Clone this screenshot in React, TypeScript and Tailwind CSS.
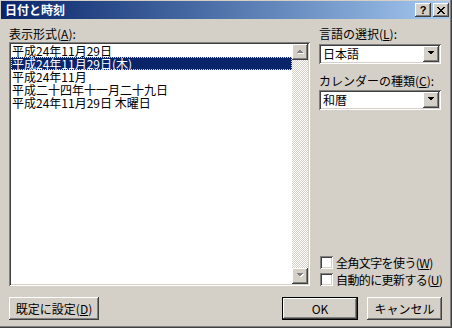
import type { ReactNode } from 'react';

const raised =
  'bg-[#d4d0c8] shadow-[inset_-1px_-1px_#404040,inset_1px_1px_#ffffff,inset_-2px_-2px_#808080,inset_2px_2px_#d4d0c8]';
const sunken =
  'shadow-[inset_1px_1px_#808080,inset_-1px_-1px_#ffffff,inset_2px_2px_#404040,inset_-2px_-2px_#d4d0c8]';

const FORMATS = [
  '平成24年11月29日',
  '平成24年11月29日(木)',
  '平成24年11月',
  '平成二十四年十一月二十九日',
  '平成24年11月29日 木曜日',
];

/** Label with an underlined access key, e.g. 表示形式(A): */
function Accel({ text, k, tail = '' }: { text: string; k: string; tail?: string }) {
  return (
    <span className="whitespace-nowrap">
      {text}(<u className="underline-offset-1">{k}</u>){tail}
    </span>
  );
}

function Arrow({ dir, disabled }: { dir: 'up' | 'down'; disabled?: boolean }) {
  const pts = dir === 'up' ? '0,4 7,4 3.5,0.5' : '0,0 7,0 3.5,3.5';
  return (
    <svg width="9" height="6" viewBox="0 0 9 6" shapeRendering="crispEdges">
      {disabled && <polygon points={pts} transform="translate(1,1)" fill="#ffffff" />}
      <polygon points={pts} fill={disabled ? '#808080' : '#000000'} />
    </svg>
  );
}

function Combo({ value }: { value: string }) {
  return (
    <div className={`flex h-[20px] w-[122px] bg-white p-[2px] ${sunken}`}>
      <div className="flex-1 pl-[2px] leading-[16px]">{value}</div>
      <div className={`grid h-[16px] w-[16px] place-items-center ${raised}`}>
        <Arrow dir="down" />
      </div>
    </div>
  );
}

function Check({ children }: { children: ReactNode }) {
  return (
    <div className="flex h-[13px] items-center">
      <span className={`ml-[1px] h-[13px] w-[13px] shrink-0 bg-white ${sunken}`} />
      <span className="ml-[3px] leading-[13px] tracking-[-0.6px]">{children}</span>
    </div>
  );
}

function Button({ children, def, w }: { children: ReactNode; def?: boolean; w: string }) {
  return (
    <div className={`${w} h-[23px] ${def ? 'border border-black' : ''}`}>
      <div className={`grid h-full w-full place-items-center leading-[13px] ${raised}`}>{children}</div>
    </div>
  );
}

export default function App() {
  return (
    <div className="h-[328px] w-[452px] overflow-hidden border-r border-b border-[#404040] bg-[#d4d0c8] font-['Noto_Sans_CJK_JP','Noto_Sans',sans-serif] text-[12px] text-black">
      <div className="flex h-full flex-col border-r border-b border-[#808080] pt-[1px] pl-[1px]">
        {/* title bar */}
        <div className="flex h-[18px] items-center bg-gradient-to-r from-[#0a246a] to-[#a6caf0] pl-[4px] pr-[1px]">
          <span className="text-[12px] leading-[18px] font-bold text-white">日付と時刻</span>
          <div className={`ml-auto grid h-[14px] w-[16px] place-items-center ${raised}`}>
            <span className="font-['Liberation_Sans',sans-serif] text-[11px] leading-[11px] font-bold">?</span>
          </div>
          <div className={`ml-[2px] grid h-[14px] w-[16px] place-items-center ${raised}`}>
            <svg width="8" height="7" viewBox="0 0 8 7" shapeRendering="crispEdges">
              <path d="M0 0h2v1h-2zM6 0h2v1h-2zM1 1h2v1h-2zM5 1h2v1h-2zM2 2h4v1h-4zM3 3h2v1h-2zM2 4h4v1h-4zM1 5h2v1h-2zM5 5h2v1h-2zM0 6h2v1h-2zM6 6h2v1h-2z" fill="#000" />
            </svg>
          </div>
        </div>

        {/* body */}
        <div className="flex flex-1 flex-col px-[8px] pt-[8px]">
          <div className="flex gap-[9px]">
            {/* format list */}
            <div className="flex w-[301px] flex-col">
              <div className="h-[15px] leading-[14px]">
                <Accel text="表示形式" k="A" tail=":" />
              </div>
              <div className={`flex h-[244px] bg-white p-[2px] ${sunken}`}>
                <div className="flex-1">
                  {FORMATS.map((f, i) => (
                    <div
                      key={f}
                      className={`h-[13px] pl-[1px] leading-[13px] whitespace-nowrap ${
                        i === 1
                          ? 'bg-[#0a246a] text-white outline-1 -outline-offset-1 outline-dotted outline-[#f5db95]'
                          : ''
                      }`}
                    >
                      {f}
                    </div>
                  ))}
                </div>
                <div className="flex w-[16px] flex-col">
                  <div className={`grid h-[16px] place-items-center ${raised}`}>
                    <Arrow dir="up" disabled />
                  </div>
                  <div className="flex-1 bg-[repeating-conic-gradient(#d4d0c8_0%_25%,#ffffff_0%_50%)] bg-[length:2px_2px]" />
                  <div className={`grid h-[16px] place-items-center ${raised}`}>
                    <Arrow dir="down" disabled />
                  </div>
                </div>
              </div>
            </div>

            {/* options */}
            <div className="flex w-[122px] flex-col">
              <div className="h-[15px] leading-[14px]">
                <Accel text="言語の選択" k="L" tail=":" />
              </div>
              <div className="mt-[2px]">
                <Combo value="日本語" />
              </div>
              <div className="mt-[10px] h-[15px] leading-[14px]">
                <Accel text="カレンダーの種類" k="C" tail=":" />
              </div>
              <div className="mt-[1px]">
                <Combo value="和暦" />
              </div>
              <div className="mt-auto flex flex-col gap-[4px]">
                <Check>
                  <Accel text="全角文字を使う" k="W" />
                </Check>
                <Check>
                  <Accel text="自動的に更新する" k="U" />
                </Check>
              </div>
            </div>
          </div>

          {/* buttons */}
          <div className="mt-[11px] flex">
            <Button w="w-[90px]">
              <Accel text="既定に設定" k="D" />
            </Button>
            <div className="ml-auto flex gap-[9px]">
              <Button w="w-[76px]" def>
                OK
              </Button>
              <Button w="w-[75px]">キャンセル</Button>
            </div>
          </div>
        </div>
      </div>
    </div>
  );
}
